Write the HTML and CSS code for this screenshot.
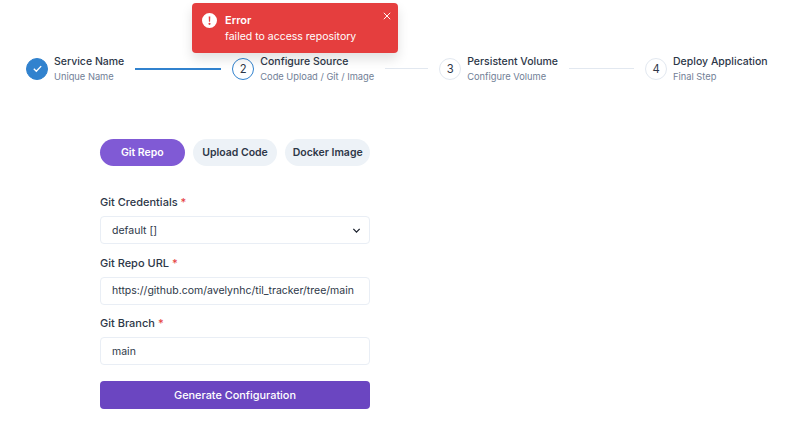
FILE: index.html
```html
<!DOCTYPE html>
<html>
<head>
    <title>Create Service</title>
    <link rel="stylesheet" href="styles.css">
</head>
<body>
    <div class="toast">
        <svg class="toast-icon" viewBox="0 0 24 24" width="15" height="15"><path fill="#fff" d="M12 0a12 12 0 1 0 0 24 12 12 0 0 0 0-24zm1.3 5.5-.4 8.4h-1.8l-.4-8.4zM12 15.6a1.7 1.7 0 1 1 0 3.4 1.7 1.7 0 0 1 0-3.4z"/></svg>
        <div>
            <div class="toast-title">Error</div>
            <div class="toast-text">failed to access repository</div>
        </div>
        <svg class="toast-close" viewBox="0 0 10 10" width="8" height="8"><path d="M1 1l8 8M9 1l-8 8" stroke="#fff" stroke-width="1.2" fill="none"/></svg>
    </div>

    <div class="stepper">
        <div class="step">
            <div class="circle done">
                <svg viewBox="0 0 12 12" width="11" height="11"><path d="M2 6.4l2.7 2.6L10 3.4" stroke="#fff" stroke-width="1.5" fill="none"/></svg>
            </div>
            <div><div class="step-title">Service Name</div><div class="step-sub">Unique Name</div></div>
        </div>
        <div class="line line-1"></div>
        <div class="step">
            <div class="circle current">2</div>
            <div><div class="step-title">Configure Source</div><div class="step-sub">Code Upload / Git / Image</div></div>
        </div>
        <div class="line line-2"></div>
        <div class="step">
            <div class="circle">3</div>
            <div><div class="step-title">Persistent Volume</div><div class="step-sub">Configure Volume</div></div>
        </div>
        <div class="line line-3"></div>
        <div class="step">
            <div class="circle">4</div>
            <div><div class="step-title">Deploy Application</div><div class="step-sub">Final Step</div></div>
        </div>
    </div>

    <div class="form">
        <div class="tabs">
            <div class="tab active">Git Repo</div>
            <div class="tab">Upload Code</div>
            <div class="tab">Docker Image</div>
        </div>
        <div class="label">Git Credentials <span class="req">*</span></div>
        <div class="field">default []
            <svg viewBox="0 0 10 10" width="9" height="9"><path d="M1.5 3.2L5 6.8l3.5-3.6" stroke="#1a202c" stroke-width="1.4" fill="none"/></svg>
        </div>
        <div class="label">Git Repo URL <span class="req">*</span></div>
        <div class="field">https://github.com/avelynhc/til_tracker/tree/main</div>
        <div class="label">Git Branch <span class="req">*</span></div>
        <div class="field">main</div>
        <div class="submit">Generate Configuration</div>
    </div>
</body>
</html>
```

FILE: styles.css
```css
body { margin: 0; background: #fff; font-family: Inter, "Noto Sans", sans-serif; color: #1a202c; }

.toast { position: absolute; left: 192px; top: 3px; width: 206px; height: 50px; box-sizing: border-box; padding: 9px 11px 0 10px; display: flex; gap: 8px; background: #e53e3e; border-radius: 4px; color: #fff; box-shadow: 0 6px 12px rgba(0, 0, 0, 0.12); }
.toast-icon { margin-top: 1px; flex: none; }
.toast-title { font-size: 11px; font-weight: 600; line-height: 16px; }
.toast-text { font-size: 10.5px; line-height: 18px; }
.toast-close { position: absolute; right: 7px; top: 9px; }

.stepper { display: flex; align-items: center; padding: 54px 0 0 26px; height: 29px; }
.step { display: flex; align-items: center; gap: 6px; flex: none; }
.circle { width: 22px; height: 22px; box-sizing: border-box; border: 1.5px solid #e2e8f0; border-radius: 50%; display: flex; align-items: center; justify-content: center; font-size: 11.25px; color: #2d3748; }
.circle.done { background: #3182ce; border-color: #3182ce; }
.circle.current { border-color: #3182ce; }
.step-title { font-size: 10.5px; font-weight: 500; line-height: 15px; color: #2d3748; }
.step-sub { font-size: 9.3px; line-height: 15px; color: #718096; }
.line { height: 1px; background: #e2e8f0; flex: none; margin: 0 11px; }
.line-1 { width: 86px; height: 2px; background: #3182ce; }
.line-2 { width: 43px; }
.line-3 { width: 65px; }

.form { width: 270px; margin: 56px 0 0 100px; }
.tabs { display: flex; gap: 8px; margin-bottom: 29px; }
.tab { flex: 1; height: 27px; display: flex; align-items: center; justify-content: center; border-radius: 14px; background: #edf2f7; font-size: 10.5px; font-weight: 600; color: #2d3748; white-space: nowrap; }
.tab.active { background: #805ad5; color: #fff; }
.label { font-size: 11px; font-weight: 500; line-height: 15px; margin-bottom: 6px; color: #2d3748; }
.req { color: #e53e3e; }
.field { height: 28px; box-sizing: border-box; border: 1px solid #e9eef5; border-radius: 4px; padding: 0 11px; margin-bottom: 11.5px; display: flex; align-items: center; justify-content: space-between; font-size: 10.5px; color: #2d3748; white-space: nowrap; }
.field svg { margin-right: -3px; }
.submit { height: 28px; margin-top: 16px; border-radius: 4px; background: #6b46c1; color: #fff; display: flex; align-items: center; justify-content: center; font-size: 10.9px; font-weight: 500; }
```
